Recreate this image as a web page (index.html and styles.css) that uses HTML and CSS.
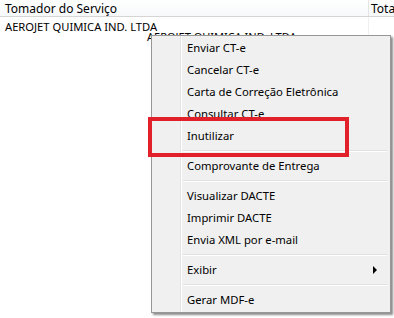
FILE: index.html
```html
<!DOCTYPE html>
<html lang="pt-BR">

<head>
    <meta charset="UTF-8">
    <title>Menu CT-e</title>
    <link rel="stylesheet" href="styles.css">
</head>

<body>
    <div class="grid">
        <div class="grid-head">
            <div class="col col-tomador">Tomador do Serviço</div>
            <div class="col col-total">Total</div>
        </div>
        <div class="grid-row">
            <div class="col col-tomador">AEROJET QUIMICA IND. LTDA</div>
            <div class="col col-total"></div>
        </div>
    </div>

    <!-- hint text partly hidden under the menu -->
    <div class="grid-hint">AEROJET QUIMICA IND. LTDA</div>

    <!-- Context menu -->
    <div class="context-menu">
        <div class="menu-item">Enviar CT-e</div>
        <div class="menu-item">Cancelar CT-e</div>
        <div class="menu-item">Carta de Correção Eletrônica</div>
        <div class="menu-item">Consultar CT-e</div>
        <div class="menu-item">Inutilizar</div>
        <div class="menu-sep"></div>
        <div class="menu-item">Comprovante de Entrega</div>
        <div class="menu-sep"></div>
        <div class="menu-item">Visualizar DACTE</div>
        <div class="menu-item">Imprimir DACTE</div>
        <div class="menu-item">Envia XML por e-mail</div>
        <div class="menu-sep"></div>
        <div class="menu-item has-sub">Exibir<span class="sub-arrow"></span></div>
        <div class="menu-sep"></div>
        <div class="menu-item">Gerar MDF-e</div>
    </div>

    <!-- Red highlight drawn over the menu -->
    <div class="highlight-box"></div>
</body>

</html>
```

FILE: styles.css
```css
* {
    margin: 0;
    padding: 0;
    box-sizing: border-box;
}

body {
    font-family: "Noto Sans", "Open Sans", sans-serif;
    font-size: 12px;
    color: #000;
    background-color: #fff;
    width: 394px;
    height: 318px;
    overflow: hidden;
    position: relative;
}

/* Grid */
.grid-head,
.grid-row {
    display: flex;
}

.grid-head {
    height: 17px;
    line-height: 17px;
    background: linear-gradient(#ffffff, #f7f8fa);
    border-bottom: 1px solid #d5d5d5;
}

.grid-row {
    height: 20px;
    line-height: 20px;
    font-size: 11.2px;
}

.col {
    padding-left: 5px;
    white-space: nowrap;
    overflow: hidden;
}

.col-tomador {
    width: 369px;
    border-right: 1px solid #e3e3e3;
}

.grid-row .col-tomador {
    border-right-color: #f0f0f0;
}

.col-total {
    flex: 1;
    padding-left: 2px;
}

.grid-hint {
    position: absolute;
    z-index: 0;
    left: 147px;
    top: 30px;
    font-size: 11px;
    line-height: 14px;
    white-space: nowrap;
}

/* Context menu */
.context-menu {
    position: absolute;
    z-index: 1;
    left: 151px;
    top: 35px;
    width: 240px;
    padding: 1px 2px 1px 2px;
    background-color: #f0f0f0;
    border: 1px solid #979797;
    box-shadow: 2px 2px 2px rgba(0, 0, 0, 0.45);
    background-image: linear-gradient(to right,
            transparent 28px, #e2e3e3 28px, #e2e3e3 29px,
            #ffffff 29px, #ffffff 30px, transparent 30px);
}

.menu-item {
    position: relative;
    height: 22px;
    line-height: 22px;
    padding-left: 33px;
    font-size: 11.3px;
    white-space: nowrap;
}

.menu-sep {
    height: 8px;
    margin-left: 29px;
    margin-right: 1px;
    background: linear-gradient(transparent 3px, #e0e0e0 3px, #e0e0e0 4px,
            #ffffff 4px, #ffffff 5px, transparent 5px);
}

.sub-arrow {
    position: absolute;
    right: 11px;
    top: 7px;
    width: 0;
    height: 0;
    border-top: 4px solid transparent;
    border-bottom: 4px solid transparent;
    border-left: 4px solid #000;
}

/* Red highlight */
.highlight-box {
    position: absolute;
    z-index: 2;
    left: 148px;
    top: 117px;
    width: 201px;
    height: 40px;
    border: 4px solid #e2202a;
}
```
